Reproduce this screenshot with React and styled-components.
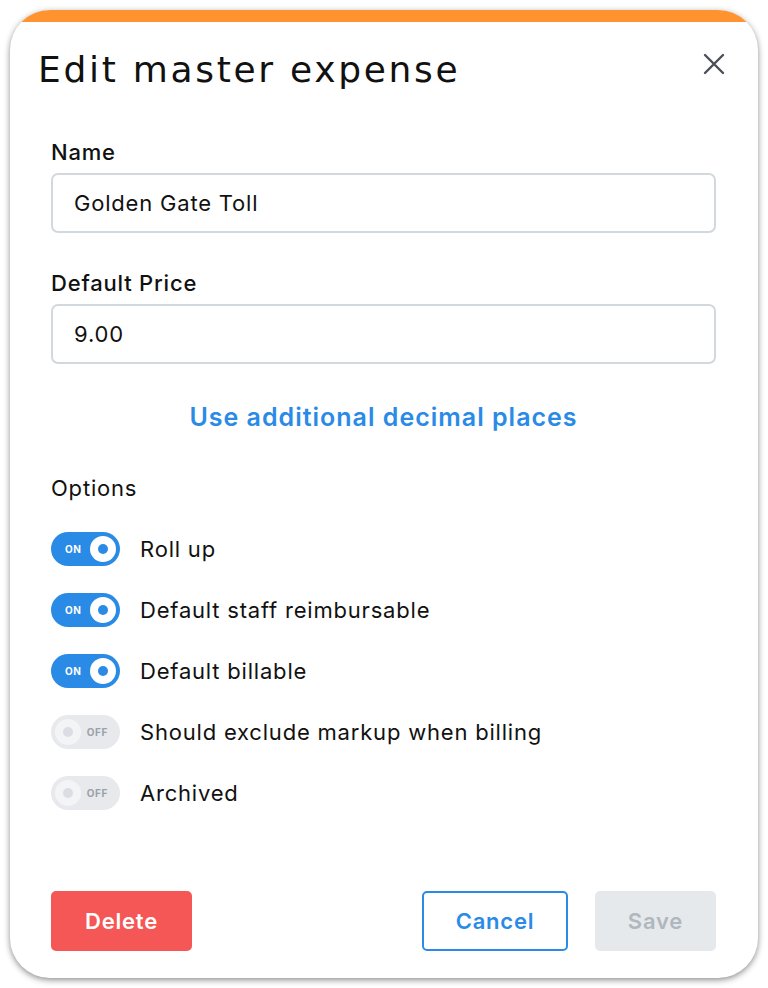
import React from "react";
import styled, { createGlobalStyle } from "styled-components";

const GlobalStyle = createGlobalStyle`
  body {
    margin: 0;
    background: #ffffff;
    font-family: Inter, "Liberation Sans", sans-serif;
    color: #111;
  }
`;

const options = [
  { label: "Roll up", on: true },
  { label: "Default staff reimbursable", on: true },
  { label: "Default billable", on: true },
  { label: "Should exclude markup when billing", on: false },
  { label: "Archived", on: false },
];

const Toggle = ({ on }) => (
  <Track $on={on}>
    {on ? (
      <>
        <TrackText $on>ON</TrackText>
        <Knob $on />
      </>
    ) : (
      <>
        <Knob />
        <TrackText>OFF</TrackText>
      </>
    )}
  </Track>
);

const CloseIcon = () => (
  <svg width="22" height="22" viewBox="0 0 22 22" fill="none">
    <path d="M2 2L20 20M20 2L2 20" stroke="#4a5058" strokeWidth="2.4" strokeLinecap="round" />
  </svg>
);

const App = () => {
  return (
    <>
      <GlobalStyle />
      <Card>
        <Stripe />
        <Header>
          <Title>Edit master expense</Title>
          <CloseButton aria-label="Close">
            <CloseIcon />
          </CloseButton>
        </Header>
        <Body>
          <Label>Name</Label>
          <Input defaultValue="Golden Gate Toll" />
          <Label $top={36}>Default Price</Label>
          <Input defaultValue="9.00" />
          <LinkButton>Use additional decimal places</LinkButton>
          <SectionTitle>Options</SectionTitle>
          <OptionList>
            {options.map((o) => (
              <OptionRow key={o.label}>
                <Toggle on={o.on} />
                <OptionLabel>{o.label}</OptionLabel>
              </OptionRow>
            ))}
          </OptionList>
        </Body>
        <Footer>
          <Button $variant="danger">Delete</Button>
          <FooterRight>
            <Button $variant="outline" $width={146}>Cancel</Button>
            <Button $variant="disabled" $width={121}>Save</Button>
          </FooterRight>
        </Footer>
      </Card>
    </>
  );
};

export default App;

const Card = styled.div`
  width: 748px;
  height: 968px;
  margin: 10px;
  box-sizing: border-box;
  background: #fff;
  border-radius: 40px;
  overflow: hidden;
  box-shadow: 0 2px 6px rgba(0, 0, 0, 0.45);
  display: flex;
  flex-direction: column;
`;

const Stripe = styled.div`
  height: 12px;
  flex-shrink: 0;
  background: #ff9330;
`;

const Header = styled.div`
  display: flex;
  align-items: flex-start;
  justify-content: space-between;
  padding: 26px 33px 0 28px;
`;

const Title = styled.h1`
  margin: 0;
  font-family: "DejaVu Sans", "Noto Sans", sans-serif;
  font-weight: 400;
  font-size: 36px;
  line-height: 44px;
  letter-spacing: 2.7px;
  color: #111;
`;

const CloseButton = styled.button`
  border: none;
  background: none;
  padding: 0;
  margin-top: 5px;
  display: flex;
  cursor: pointer;
`;

const Body = styled.div`
  display: flex;
  flex-direction: column;
  padding: 0 42px 0 41px;
`;

const Label = styled.label`
  margin-top: ${(p) => p.$top || 46}px;
  margin-bottom: 7px;
  font-size: 22px;
  line-height: 28px;
  font-weight: 500;
  letter-spacing: 0.8px;
`;

const Input = styled.input`
  height: 60px;
  box-sizing: border-box;
  border: 2px solid #d3d8dd;
  border-radius: 7px;
  padding: 0 21px;
  font-family: Inter, "Liberation Sans", sans-serif;
  font-size: 22px;
  letter-spacing: 0.8px;
  color: #111;
  outline: none;
`;

const LinkButton = styled.button`
  align-self: center;
  margin-top: 37px;
  border: none;
  background: none;
  padding: 0;
  font-family: Inter, "Liberation Sans", sans-serif;
  font-size: 25px;
  line-height: 32px;
  font-weight: 600;
  letter-spacing: 1px;
  color: #2a8be6;
  cursor: pointer;
`;

const SectionTitle = styled.div`
  margin-top: 41px;
  font-size: 22px;
  line-height: 28px;
  letter-spacing: 0.8px;
`;

const OptionList = styled.div`
  display: flex;
  flex-direction: column;
  gap: 27px;
  margin-top: 30px;
`;

const OptionRow = styled.div`
  display: flex;
  align-items: center;
  gap: 20px;
  height: 34px;
`;

const OptionLabel = styled.span`
  font-size: 22px;
  line-height: 28px;
  letter-spacing: 0.8px;
`;

const Track = styled.div`
  width: 69px;
  height: 34px;
  box-sizing: border-box;
  border-radius: 17px;
  background: ${(p) => (p.$on ? "#2a8be6" : "#e7e9ec")};
  display: flex;
  align-items: center;
  justify-content: space-between;
  padding: 0 4px 0 ${(p) => (p.$on ? 14 : 4)}px;
  flex-shrink: 0;
`;

const TrackText = styled.span`
  font-size: 10px;
  font-weight: 700;
  letter-spacing: 0.6px;
  color: ${(p) => (p.$on ? "#fff" : "#9aa1a8")};
  margin-right: ${(p) => (p.$on ? 0 : 8)}px;
`;

const Knob = styled.span`
  width: 26px;
  height: 26px;
  border-radius: 50%;
  background: ${(p) => (p.$on ? "#fff" : "#f3f4f6")};
  display: flex;
  align-items: center;
  justify-content: center;
  &::after {
    content: "";
    width: 10px;
    height: 10px;
    border-radius: 50%;
    background: ${(p) => (p.$on ? "#2a8be6" : "#dadde1")};
  }
`;

const Footer = styled.div`
  margin-top: auto;
  display: flex;
  justify-content: space-between;
  padding: 0 42px 27px 41px;
`;

const FooterRight = styled.div`
  display: flex;
  gap: 27px;
`;

const variants = {
  danger: "background: #f55656; color: #fff; border-color: #f55656;",
  outline: "background: #fff; color: #2a8be6; border-color: #2a8be6;",
  disabled: "background: #e6e9ec; color: #b0b7be; border-color: #e6e9ec;",
};

const Button = styled.button`
  width: ${(p) => p.$width || 141}px;
  height: 60px;
  border: 2px solid;
  border-radius: 5px;
  font-family: Inter, "Liberation Sans", sans-serif;
  font-size: 22px;
  font-weight: 600;
  letter-spacing: 0.8px;
  cursor: pointer;
  ${(p) => variants[p.$variant]}
`;
